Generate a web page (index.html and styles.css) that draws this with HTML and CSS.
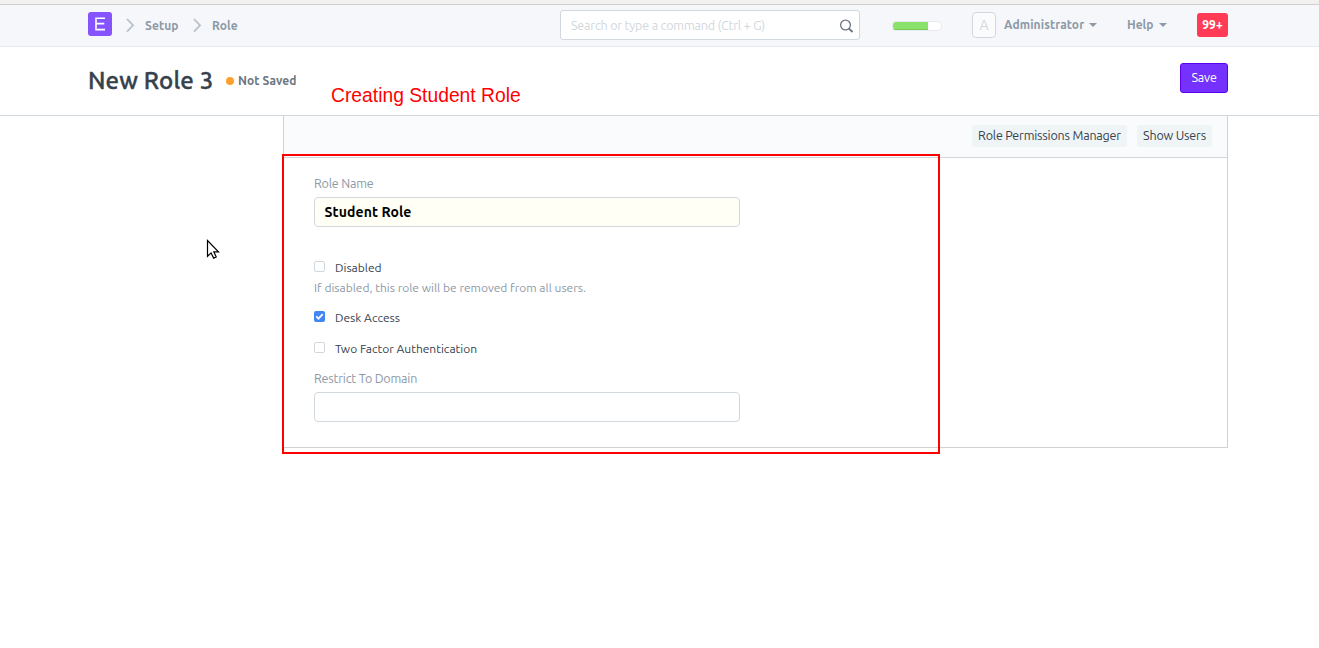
FILE: index.html
```html
<!DOCTYPE html>
<html lang="en">
<head>
<meta charset="utf-8">
<title>New Role 3</title>
<link rel="stylesheet" href="styles.css">
</head>
<body>
<div class="chrome-edge"></div>
<nav class="navbar">
  <div class="logo"><svg width="24" height="24" viewBox="0 0 24 24"><path d="M17 6.2H8v11.4h9M8 11.6h8.3" fill="none" stroke="#fff" stroke-width="1.6"/></svg></div>
  <svg class="chevron first" width="9" height="15" viewBox="0 0 9 15"><path d="M1 1l6 6.3-6 6.3" /></svg>
  <a class="crumb setup">Setup</a>
  <svg class="chevron" width="9" height="15" viewBox="0 0 9 15"><path d="M1 1l6 6.3-6 6.3" /></svg>
  <a class="crumb role">Role</a>
  <div class="search"><span class="placeholder">Search or type a command (Ctrl + G)</span>
    <svg width="15" height="15" viewBox="0 0 15 15"><circle cx="6.5" cy="6" r="4.9" fill="none" stroke="#6c7680" stroke-width="1.3"/><path d="M10 9.6l3.5 3.4" stroke="#6c7680" stroke-width="2"/></svg>
  </div>
  <div class="progress"><div class="progress-bar"></div></div>
  <div class="avatar">A</div>
  <a class="menu admin"><span>Administrator</span><i class="caret"></i></a>
  <a class="menu help"><span>Help</span><i class="caret"></i></a>
  <div class="count">99+</div>
</nav>
<header class="page-head">
  <h1 class="title">New Role 3</h1>
  <i class="dot"></i>
  <span class="status">Not Saved</span>
  <span class="note">Creating Student Role</span>
  <button class="save">Save</button>
</header>
<main class="layout">
  <div class="toolbar">
    <button class="tool perms">Role Permissions Manager</button>
    <button class="tool users">Show Users</button>
  </div>
  <form class="form">
    <label class="label name-label">Role Name</label>
    <div class="input filled">Student Role</div>
    <div class="check disabled"><i class="box"></i><span>Disabled</span></div>
    <p class="help-text">If disabled, this role will be removed from all users.</p>
    <div class="check desk"><i class="box on"><svg width="11" height="11" viewBox="0 0 11 11"><path d="M2.3 5.4l2.2 2.2 4.2-4.4" fill="none" stroke="#fff" stroke-width="1.8"/></svg></i><span>Desk Access</span></div>
    <div class="check two"><i class="box"></i><span>Two Factor Authentication</span></div>
    <label class="label domain-label">Restrict To Domain</label>
    <div class="input"></div>
  </form>
</main>
<div class="highlight"></div>
<svg class="cursor" width="14" height="21" viewBox="0 0 14 21"><path d="M1.5 1.5v15.8l3.6-3.4 2.5 5.2 2.6-1.2-2.4-5.1h4.7z" fill="#fff" stroke="#000" stroke-width="1.2"/></svg>
</body>
</html>
```

FILE: styles.css
```css
* { box-sizing: border-box; }
body {
  margin: 0;
  height: 648px;
  overflow: hidden;
  background: #fff;
  color: #36414c;
  font: 12px/18px "Ubuntu", "Noto Sans", sans-serif;
  white-space: nowrap;
}
.chrome-edge { height: 5px; background: #f2f1ef; border-bottom: 1px solid #d0cfcd; }
.navbar {
  display: flex;
  align-items: flex-start;
  height: 42px;
  padding: 0 91px 0 88px;
  background: #f5f7fa;
  border-bottom: 1px solid #e6e9ed;
  color: #8d99a6;
  font-weight: 700;
}
.logo { width: 24px; height: 24px; margin-top: 7px; border-radius: 3px; background: #8654ff; }
.logo svg, .search svg, .box svg { display: block; }
.chevron { margin-top: 13px; fill: none; stroke: #b8c2cc; stroke-width: 1.8; }
.first { margin-left: 14px; }
.crumb { margin-top: 12px; letter-spacing: 0.1px; }
.setup { width: 34px; margin-left: 10px; margin-right: 14px; }
.role { width: 26px; margin-left: 10px; }
.search {
  display: flex;
  align-items: center;
  justify-content: space-between;
  width: 300px;
  height: 30px;
  margin: 5px 0 0 322px;
  padding: 0 5px 0 10px;
  border: 1px solid #d1d8dd;
  border-radius: 3px;
  background: #fff;
}
.placeholder { color: #d1d8dd; font-size: 12.5px; font-weight: 400; letter-spacing: -0.18px; }
.search svg { margin-top: 2px; }
.progress {
  width: 50px;
  height: 10px;
  margin: 16px 0 0 32px;
  border: 1px solid #e8eaed;
  border-radius: 4px;
  background: #fff;
  overflow: hidden;
}
.progress-bar { width: 73%; height: 8px; background: #8ae26b; border-bottom: 1px solid #78c95c; }
.avatar {
  width: 24px;
  height: 26px;
  margin: 7px 0 0 30px;
  border: 1px solid #d1d8dd;
  border-radius: 4px;
  background: #fafbfc;
  color: #d1d8dd;
  font-size: 14px;
  font-weight: 400;
  line-height: 25px;
  text-align: center;
}
.menu { display: flex; justify-content: space-between; margin-top: 11px; }
.admin { width: 93px; margin-left: 8px; letter-spacing: 0.1px; }
.help { width: 40px; margin-left: 30px; }
.caret { margin-top: 7px; width: 8px; height: 4px; background: #8d99a6; clip-path: polygon(0 0, 100% 0, 50% 100%); }
.count {
  width: 31px;
  height: 24px;
  margin: 8px 0 0 30px;
  border-radius: 3px;
  background: #ff3b56;
  color: #fff;
  line-height: 23px;
  text-align: center;
}
.page-head {
  display: flex;
  align-items: flex-start;
  height: 69px;
  padding: 0 91px 0 88px;
  border-bottom: 1px solid #d1d8dd;
}
.title {
  width: 125px;
  margin: 16px 0 0;
  font-size: 24px;
  font-weight: 500;
  line-height: 36px;
  letter-spacing: 0.15px;
  -webkit-text-stroke: 0.4px currentColor;
}
.dot { width: 8px; height: 8px; margin: 30px 4px 0 13px; border-radius: 50%; background: #ffa02d; }
.status { width: 59px; margin-top: 25px; color: #6c7680; font-weight: 700; letter-spacing: 0.06px; }
.note { margin: 37px 0 0 34px; color: #f00; font: 19.3px/23px "Liberation Sans", Arial, sans-serif; }
.save {
  width: 48px;
  height: 30px;
  margin: 16px 0 0 auto;
  padding: 0 0 2px;
  border: 1px solid #5e00f0;
  border-radius: 3px;
  background: #7532ff;
  color: #fff;
}
.layout { width: 945px; height: 332px; margin-left: 283px; border: 1px solid #d1d1d4; border-top: 0; }
.toolbar {
  display: flex;
  gap: 10px;
  justify-content: flex-end;
  height: 42px;
  padding: 9px 15px 0 0;
  border-bottom: 1px solid #d1d8dd;
  background: #fafbfc;
}
.tool { height: 22px; padding: 0 0 2px; border: 0; border-radius: 3px; background: #eff4f6; color: #36414c; }
.save, .tool { font: inherit; font-size: 12.5px; letter-spacing: -0.18px; }
.perms { width: 155px; }
.users { width: 75px; }
.form { display: flex; flex-direction: column; width: 456px; padding: 16px 0 0 30px; }
.label { color: #8d99a6; font-size: 12.5px; line-height: 18px; letter-spacing: -0.18px; }
.input {
  height: 30px;
  margin-top: 5px;
  padding: 0 9.5px;
  border: 1px solid #d1d8dd;
  border-radius: 4px;
  background: #fff;
  color: #000;
  font-size: 14px;
  font-weight: 700;
  line-height: 28px;
  letter-spacing: 0.1px;
}
.filled { background: #fffff5; }
.check { display: flex; gap: 10px; height: 18px; }
.box { width: 11px; height: 11px; margin-top: 2px; border: 1px solid #d1d8dd; border-radius: 2px; }
.on { border: 0; background: #4286f5; }
.disabled { margin-top: 32px; }
.help-text { margin: 2px 0 0; color: #8d99a6; }
.desk { margin-top: 12px; }
.two { margin-top: 13px; }
.domain-label { margin-top: 11px; }
.highlight { position: absolute; left: 282px; top: 154px; width: 658px; height: 300px; border: 2px solid #f00; }
.cursor { position: absolute; left: 206px; top: 239px; }
```
